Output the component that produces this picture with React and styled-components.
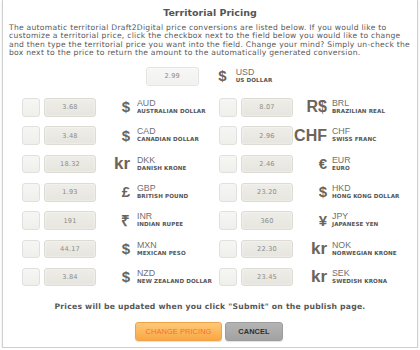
import styled, { createGlobalStyle } from 'styled-components';

const GlobalStyle = createGlobalStyle`
  html, body {
    margin: 0;
    padding: 0;
    background: #ffffff;
  }
  body {
    font-family: "DejaVu Sans", Verdana, sans-serif;
  }
`;

const Modal = styled.div`
  box-sizing: border-box;
  width: 416px;
  height: 348px;
  margin: 0 2px;
  background: #ffffff;
  border: 1px solid #cfcfcf;
  border-top: none;
  box-shadow: 0 1px 2px rgba(0, 0, 0, 0.12);
  display: flex;
  flex-direction: column;
`;

const Title = styled.h1`
  margin: 7.4px 0 0;
  font-size: 9.5px;
  line-height: 12px;
  font-weight: bold;
  text-align: center;
  color: #555555;
`;

const Intro = styled.p`
  margin: 4.7px 0 0;
  padding: 0 0 0 6px;
  font-size: 7.6px;
  line-height: 8.4px;
  letter-spacing: 0.27px;
  white-space: nowrap;
  color: #585858;
`;

const UsdRow = styled.div`
  display: flex;
  justify-content: center;
  align-items: center;
  margin-top: 9.3px;
  padding-right: 2px;
`;

const Grid = styled.div`
  display: grid;
  grid-template-columns: 197px 1fr;
  row-gap: 9.8px;
  margin-top: 12.7px;
  padding-left: 19px;
`;

const Cell = styled.div`
  display: flex;
  align-items: center;
  height: 18.5px;
`;

const Check = styled.span`
  box-sizing: border-box;
  width: 18px;
  height: 18.5px;
  margin-right: 4px;
  border: 1px solid #e0e0de;
  border-radius: 3px;
  background: linear-gradient(#f6f6f4, #efefec);
`;

const PriceBox = styled.span`
  box-sizing: border-box;
  width: ${({ $wide }) => ($wide ? 53 : 52)}px;
  height: 18.5px;
  display: flex;
  align-items: center;
  justify-content: center;
  border: 1px solid ${({ $light }) => ($light ? '#e4e4e2' : '#dcdbd4')};
  border-radius: 3px;
  background: ${({ $light }) =>
    $light ? 'linear-gradient(#f7f7f6, #f1f1ef)' : 'linear-gradient(#eeede8, #e6e5de)'};
  box-shadow: inset 0 0 2px rgba(255, 255, 255, 0.9);
  font-size: 6.6px;
  letter-spacing: 0.2px;
  color: #8d8d89;
`;

const Symbol = styled.span`
  width: ${({ $w }) => $w}px;
  margin-right: ${({ $gap }) => $gap}px;
  text-align: right;
  font-family: "Liberation Sans", Arial, sans-serif;
  font-weight: bold;
  font-size: ${({ $size }) => $size}px;
  line-height: 18px;
  color: #6c6459;
  white-space: nowrap;
`;

const Labels = styled.span`
  display: flex;
  flex-direction: column;
  margin-top: -1px;
`;

const Code = styled.span`
  font-family: "Liberation Sans", Arial, sans-serif;
  font-size: 8.8px;
  line-height: 9px;
  color: #6f6f6f;
`;

const Name = styled.span`
  font-size: 5.6px;
  line-height: 6.5px;
  letter-spacing: 0.1px;
  font-weight: bold;
  color: #555555;
  text-transform: uppercase;
  white-space: nowrap;
`;

const Note = styled.p`
  margin: 16px 0 0;
  font-size: 7.7px;
  line-height: 9px;
  letter-spacing: 0.22px;
  font-weight: bold;
  text-align: center;
  color: #575757;
`;

const Buttons = styled.div`
  display: flex;
  justify-content: center;
  gap: 3px;
  margin-top: 10.7px;
  padding-right: 2px;
`;

const Button = styled.button`
  box-sizing: border-box;
  height: 18.5px;
  width: ${({ $w }) => $w}px;
  padding: 0;
  border-radius: 3px;
  font-family: "Liberation Sans", Arial, sans-serif;
  font-size: 7.4px;
  font-weight: ${({ $primary }) => ($primary ? 'normal' : 'bold')};
  letter-spacing: 0.1px;
  border: 1px solid ${({ $primary }) => ($primary ? '#efa24a' : '#9d9d9d')};
  color: ${({ $primary }) => ($primary ? '#f3722a' : '#303030')};
  background: ${({ $primary }) =>
    $primary ? 'linear-gradient(#fec977, #f9a744)' : 'linear-gradient(#b4b4b4, #a2a2a2)'};
  box-shadow: 0 1px 1px rgba(0, 0, 0, 0.12);
`;

const currencies = [
  { value: '3.68', sym: '$', code: 'AUD', name: 'Australian Dollar' },
  { value: '8.07', sym: 'R$', code: 'BRL', name: 'Brazilian Real' },
  { value: '3.48', sym: '$', code: 'CAD', name: 'Canadian Dollar' },
  { value: '2.96', sym: 'CHF', code: 'CHF', name: 'Swiss Franc' },
  { value: '18.32', sym: 'kr', code: 'DKK', name: 'Danish Krone' },
  { value: '2.46', sym: '€', code: 'EUR', name: 'Euro' },
  { value: '1.93', sym: '£', code: 'GBP', name: 'British Pound' },
  { value: '23.20', sym: '$', code: 'HKD', name: 'Hong Kong Dollar' },
  { value: '191', sym: '₹', code: 'INR', name: 'Indian Rupee' },
  { value: '360', sym: '¥', code: 'JPY', name: 'Japanese Yen' },
  { value: '44.17', sym: '$', code: 'MXN', name: 'Mexican Peso' },
  { value: '22.30', sym: 'kr', code: 'NOK', name: 'Norwegian Krone' },
  { value: '3.84', sym: '$', code: 'NZD', name: 'New Zealand Dollar' },
  { value: '23.45', sym: 'kr', code: 'SEK', name: 'Swedish Krona' },
];

const symbolSize = (sym) => (sym === 'kr' ? 17 : sym === 'CHF' || sym === 'R$' ? 16 : 15);

const App = () => {
  return (
    <>
      <GlobalStyle />
      <Modal>
        <Title>Territorial Pricing</Title>
        <Intro>
          The automatic territorial Draft2Digital price conversions are listed below. If you would like to
          <br />
          customize a territorial price, click the checkbox next to the field below you would like to change
          <br />
          and then type the territorial price you want into the field. Change your mind? Simply un-check the
          <br />
          box next to the price to return the amount to the automatically generated conversion.
        </Intro>

        <UsdRow>
          <PriceBox $wide $light>2.99</PriceBox>
          <Symbol $w={28} $gap={9} $size={15}>$</Symbol>
          <Labels>
            <Code>USD</Code>
            <Name>US Dollar</Name>
          </Labels>
        </UsdRow>

        <Grid>
          {currencies.map((c, i) => (
            <Cell key={c.code}>
              <Check />
              <PriceBox>{c.value}</PriceBox>
              <Symbol $w={34} $gap={i % 2 ? 5 : 7} $size={symbolSize(c.sym)}>
                {c.sym}
              </Symbol>
              <Labels>
                <Code>{c.code}</Code>
                <Name>{c.name}</Name>
              </Labels>
            </Cell>
          ))}
        </Grid>

        <Note>Prices will be updated when you click "Submit" on the publish page.</Note>

        <Buttons>
          <Button $primary $w={87}>CHANGE PRICING</Button>
          <Button $w={58}>CANCEL</Button>
        </Buttons>
      </Modal>
    </>
  );
};

export default App;
